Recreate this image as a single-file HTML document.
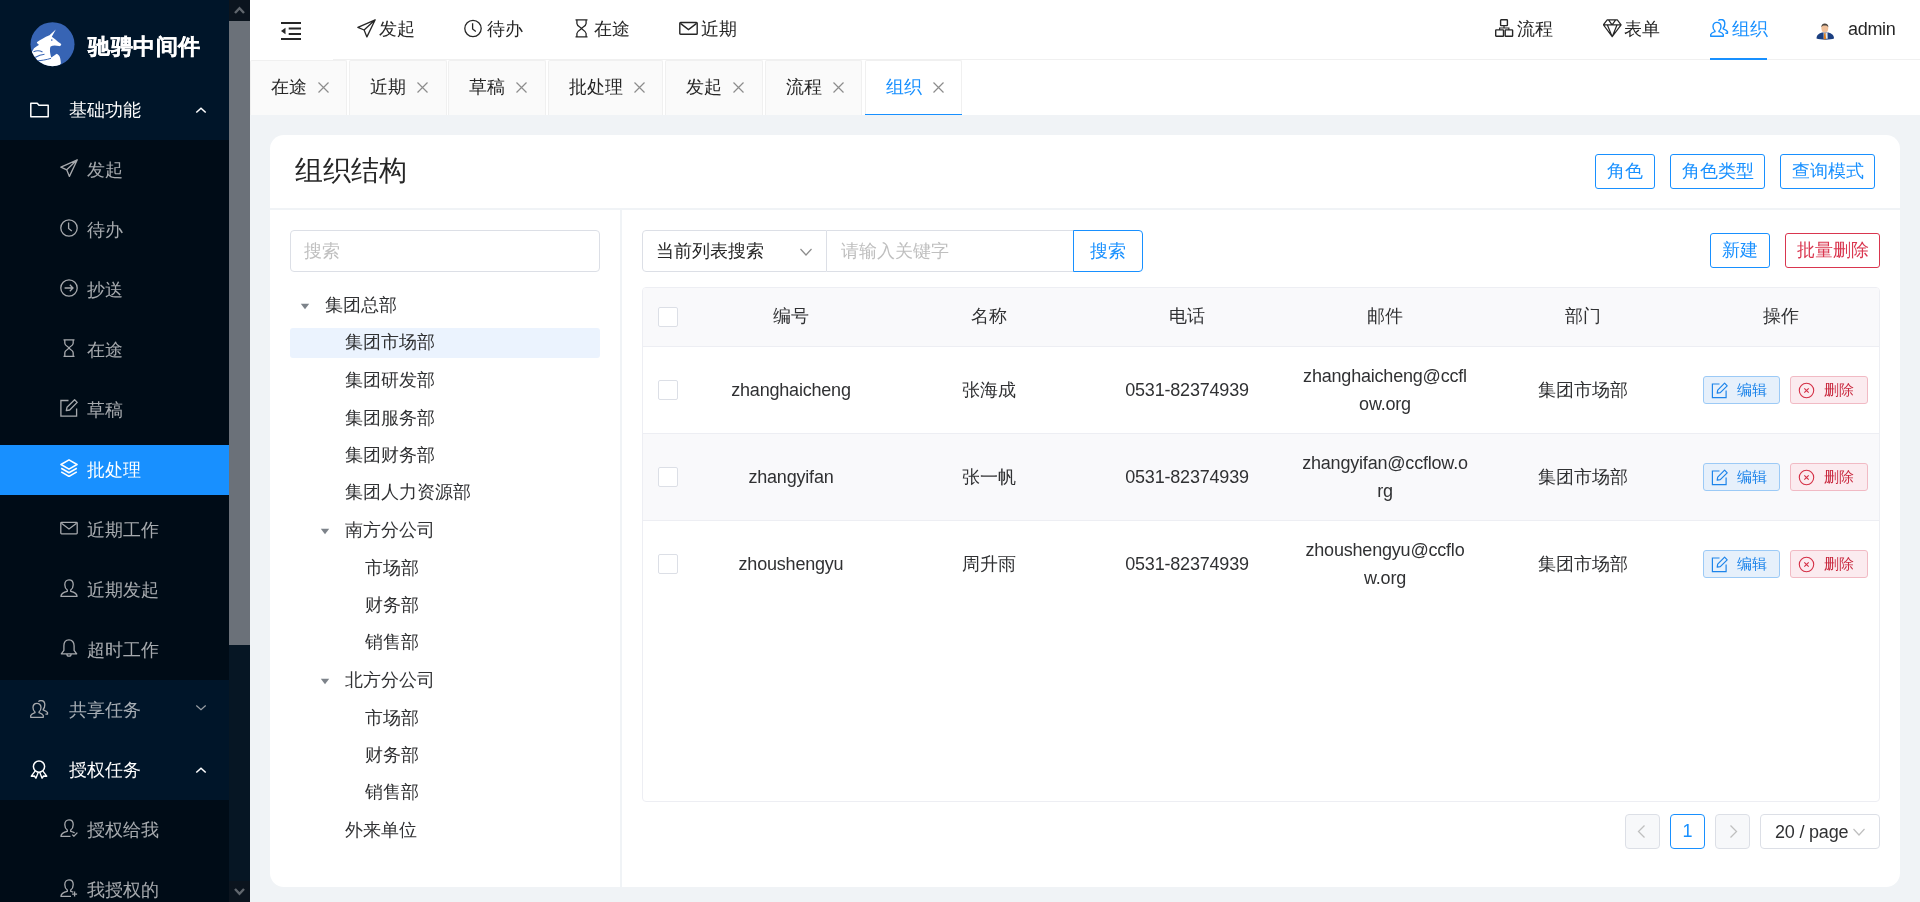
<!DOCTYPE html>
<html><head><meta charset="utf-8">
<style>
*{box-sizing:border-box;margin:0;padding:0}
body>*{will-change:transform}
html,body{width:1920px;height:902px;overflow:hidden;background:#f0f3f6;font-family:"Liberation Sans",sans-serif;color:#262626}
.a{position:absolute}
svg{display:block}
#side{left:0;top:0;width:229px;height:902px;background:#001529}
#sbar{left:229px;top:0;width:21px;height:902px;background:#061624}
.mi{position:absolute;left:0;width:229px;height:50px;line-height:50px;font-size:18px;color:rgba(255,255,255,.65)}
.mi .ic{position:absolute;left:60px;top:14px}
.mi .tx{position:absolute;left:87px;top:0}
.mt{position:absolute;left:0;width:229px;height:60px;line-height:60px;font-size:18px;color:rgba(255,255,255,.65)}
.mt .ic{position:absolute;left:30px;top:20px}
.mt .tx{position:absolute;left:69px;top:0}
.mt .ar{position:absolute;left:195px;top:26px}
#hdr{left:250px;top:0;width:1670px;height:60px;background:#fff}
#tabs{left:250px;top:60px;width:1670px;height:55px;background:#fff}
.tab{position:absolute;top:60px;height:55px;background:#fafafa;border:1px solid #f0f0f0;border-bottom:none;border-radius:2px 2px 0 0;font-size:18px;line-height:53px;color:#262626}
.tab .tx{position:absolute;left:20px;top:0}
.tab .cl{position:absolute;top:21px}
#card{left:270px;top:135px;width:1630px;height:752px;background:#fff;border-radius:14px}
.btn{position:absolute;height:35px;border:1px solid #1890ff;border-radius:3px;color:#1890ff;font-size:18px;line-height:33px;text-align:center;background:#fff}
.tree{position:absolute;font-size:18px;line-height:30px;height:30px;color:#303133;white-space:nowrap}
.th{position:absolute;top:287px;height:59px;line-height:59px;font-size:18px;color:#303133;text-align:center;width:198px}
.td{position:absolute;font-size:18px;color:#303133;text-align:center;width:198px;letter-spacing:-0.2px}
.cb{position:absolute;width:20px;height:20px;border:1px solid #dcdfe6;border-radius:2px;background:#fff}
.eb{position:absolute;width:77px;height:28px;border:1px solid #9ccaf6;background:#e6f0fb;border-radius:3px;color:#1d84ea;font-size:15px}
.db{position:absolute;width:78px;height:28px;border:1px solid #f1bac4;background:#fbebef;border-radius:3px;color:#c9293f;font-size:15px}
</style></head><body>
<div id="side" class="a">
<div class="a" style="left:0;top:140px;width:229px;height:540px;background:#000c17"></div>
<div class="a" style="left:0;top:800px;width:229px;height:102px;background:#000c17"></div>
<svg class="a" style="left:30px;top:22px" width="45" height="45" viewBox="0 0 45 45"><defs><clipPath id="lc"><circle cx="22.5" cy="22.2" r="22"/></clipPath></defs><circle cx="22.5" cy="22.2" r="22" fill="#3764b4"/><g clip-path="url(#lc)"><path fill="#fff" d="M25.8 7.4L21.8 14.7C23.8 15.9 27.2 19.1 29 20.4C30.3 21.1 31.3 21.9 31.2 22.7C30.9 23.7 29.9 24.3 28.9 24.1C26.3 23.5 22.8 23.3 20.6 24.4C19.5 26.6 19.8 30.6 21.3 35.6C23.3 34.1 25.3 32.6 26.9 31.8C28.3 32.6 29.3 33.6 29.8 35.1C30.5 37.1 30.8 39.6 30.9 41.6L29.3 43.5L10 48L-2 40L0.8 31.5C2.2 29.8 3.2 27.8 4 26.2C5.5 25 7.3 23.8 9.2 22.8C8.2 22.5 7.4 21.5 6.8 20.2C8.8 18.8 10.8 17.6 12.5 16.8C14.8 15.2 17 14 19.5 13.2Z"/><path d="M3.5 29.8C7 28.2 10 28.6 12.5 30M5 35.5C8.5 33.5 11.5 32.5 14.5 32.2" fill="none" stroke="#3764b4" stroke-width="1.1"/><path d="M6.5 39C11 38.5 16 38 21 36.3" fill="none" stroke="#3764b4" stroke-width="1"/><circle cx="21.8" cy="18.1" r="0.8" fill="#3764b4"/></g></svg>

<div class="a" style="left:88px;top:32px;font-size:22px;line-height:30px;font-weight:bold;color:#fff;white-space:nowrap;letter-spacing:0.5px;-webkit-text-stroke:0.3px #fff">驰骋中间件</div>
<div class="mt" style="top:80px;color:#fff"><svg class="ic" style="left:30px;top:22px" width="19" height="16" viewBox="0 0 19 16"><path d="M0.8 1.2h6.4l1.8 2.1h9.2v11.5H0.8z" fill="none" stroke="#fff" stroke-width="1.5" stroke-linejoin="round"/></svg><span class="tx">基础功能</span><svg class="a" style="left:195px;top:26px" width="12" height="8" viewBox="0 0 12 8"><path d="M1.3 6.5L6 2.2l4.7 4.3" fill="none" stroke="#fff" stroke-width="1.5"/></svg></div>
<div class="mi" style="top:145px;"><svg class="ic" width="18" height="18" viewBox="0 0 18 18"><path d="M17.3 0.8L0.9 8.2l5.8 2.6 2.7 6.6zM17.3 0.8L6.7 10.8" fill="none" stroke="#a6a9ad" stroke-width="1.3" stroke-linejoin="round"/></svg><span class="tx">发起</span></div>
<div class="mi" style="top:205px;"><svg class="ic" width="18" height="18" viewBox="0 0 18 18"><circle cx="9" cy="9" r="8.2" fill="none" stroke="#a6a9ad" stroke-width="1.3"/><path d="M8.6 3.6v5.8l3.2 2.6" fill="none" stroke="#a6a9ad" stroke-width="1.3"/></svg><span class="tx">待办</span></div>
<div class="mi" style="top:265px;"><svg class="ic" width="18" height="18" viewBox="0 0 18 18"><circle cx="9" cy="9" r="8.2" fill="none" stroke="#a6a9ad" stroke-width="1.3"/><path d="M4.6 9h8.2M9.8 5.8L13 9l-3.2 3.2" fill="none" stroke="#a6a9ad" stroke-width="1.3"/></svg><span class="tx">抄送</span></div>
<div class="mi" style="top:325px;"><svg class="ic" width="18" height="18" viewBox="0 0 18 18"><path d="M3.5 0.8h11M3.5 17.3h11M4.8 0.8v3.5c0 2.6 4.2 3.8 4.2 4.7s-4.2 2.1-4.2 4.7v3.6M13.2 0.8v3.5c0 2.6-4.2 3.8-4.2 4.7s4.2 2.1 4.2 4.7v3.6" fill="none" stroke="#a6a9ad" stroke-width="1.3"/></svg><span class="tx">在途</span></div>
<div class="mi" style="top:385px;"><svg class="ic" width="18" height="18" viewBox="0 0 18 18"><path d="M8.5 1.5H0.9v15.7h15.7V9.5" fill="none" stroke="#a6a9ad" stroke-width="1.3"/><path d="M6.3 11.7l.7-3.4L14.6.8l2.6 2.6-7.5 7.6z" fill="none" stroke="#a6a9ad" stroke-width="1.3" stroke-linejoin="round"/></svg><span class="tx">草稿</span></div>
<div class="mi" style="top:445px;background:#1890ff;color:#fff;"><svg class="ic" width="18" height="18" viewBox="0 0 18 18"><path d="M9 0.9l8 4.6-8 4.6-8-4.6z" fill="none" stroke="#fff" stroke-width="1.6" stroke-linejoin="round"/><path d="M1.2 9.3L9 13.8l7.8-4.5M1.2 12.9L9 17.4l7.8-4.5" fill="none" stroke="#fff" stroke-width="1.6" stroke-linejoin="round"/></svg><span class="tx">批处理</span></div>
<div class="mi" style="top:505px;"><svg class="ic" width="18" height="18" viewBox="0 0 18 18"><rect x="0.8" y="3.3" width="16.4" height="11.6" rx="0.8" fill="none" stroke="#a6a9ad" stroke-width="1.3"/><path d="M1.4 4.2L9 10l7.6-5.8" fill="none" stroke="#a6a9ad" stroke-width="1.3"/></svg><span class="tx">近期工作</span></div>
<div class="mi" style="top:565px;"><svg class="ic" width="18" height="18" viewBox="0 0 18 18"><path d="M9 0.9C6.5 0.9 4.8 2.9 4.8 5.7c0 2.3 1 4.2 2.5 5.3v1.3C4.3 12.9 1.2 14.2 0.9 17.3h16.2c-.3-3.1-3.4-4.4-6.4-5v-1.3c1.5-1.1 2.5-3 2.5-5.3C13.2 2.9 11.5.9 9 .9z" fill="none" stroke="#a6a9ad" stroke-width="1.3" stroke-linejoin="round"/></svg><span class="tx">近期发起</span></div>
<div class="mi" style="top:625px;"><svg class="ic" width="18" height="18" viewBox="0 0 18 18"><path d="M9 0.9C5.9 0.9 3.9 3.3 3.9 6.8v4.6L1.3 14.8h15.4l-2.6-3.4V6.8C14.1 3.3 12.1.9 9 .9z" fill="none" stroke="#a6a9ad" stroke-width="1.3" stroke-linejoin="round"/><path d="M6.9 14.9c0 1.4.9 2.3 2.1 2.3s2.1-.9 2.1-2.3" fill="none" stroke="#a6a9ad" stroke-width="1.3"/></svg><span class="tx">超时工作</span></div>
<div class="mi" style="top:805px;"><svg class="ic" width="18" height="18" viewBox="0 0 18 18"><path d="M10.5 17.3H0.9c.3-3.1 3.4-4.4 6.4-5v-1.3C5.8 9.9 4.8 8 4.8 5.7 4.8 2.9 6.5.9 9 .9s4.2 2 4.2 4.8c0 2.3-1 4.2-2.5 5.3v1.3c1.4.3 2.8.8 3.9 1.6" fill="none" stroke="#a6a9ad" stroke-width="1.3" stroke-linejoin="round"/><path d="M12.3 15.6l1.6 1.6 3.5-3.6" fill="none" stroke="#a6a9ad" stroke-width="1.3"/></svg><span class="tx">授权给我</span></div>
<div class="mi" style="top:865px;"><svg class="ic" width="18" height="18" viewBox="0 0 18 18"><path d="M11 17.3H0.9c.3-3.1 3.4-4.4 6.4-5v-1.3C5.8 9.9 4.8 8 4.8 5.7 4.8 2.9 6.5.9 9 .9s4.2 2 4.2 4.8c0 2.3-1 4.2-2.5 5.3v1.3c1 .2 1.8.5 2.6.9" fill="none" stroke="#a6a9ad" stroke-width="1.3" stroke-linejoin="round"/><path d="M14.6 12.6v5M12.1 15.1h5" fill="none" stroke="#a6a9ad" stroke-width="1.3"/></svg><span class="tx">我授权的</span></div>
<div class="mt" style="top:680px"><svg class="ic" width="19" height="19" viewBox="0 0 19 19"><path d="M6.9 3.4C4.7 3.4 3 5.1 3 7.6c0 2 .8 3.5 2 4.4v.7c-1.9.6-3.7 1.4-4.3 2.8v1.8h12.6v-1.8c-.6-1.4-2.4-2.2-4.3-2.8V12c1.2-.9 2-2.4 2-4.4 0-2.5-1.7-4.2-4.1-4.2z" fill="none" stroke="#a6a9ad" stroke-width="1.3" stroke-linejoin="round"/><path d="M8.4 1.6C9 .9 9.9.5 10.9.5c2.1 0 3.9 1.6 3.9 4.2 0 1.9-.5 3.5-1.6 4.6v.6c1.8.6 3.8 1.6 4.3 2.7v1.6h-2.1" fill="none" stroke="#a6a9ad" stroke-width="1.3" stroke-linejoin="round"/></svg><span class="tx">共享任务</span><svg class="a" style="left:195px;top:24px" width="12" height="8" viewBox="0 0 12 8"><path d="M1.3 1.5L6 5.8l4.7-4.3" fill="none" stroke="#9aa0a6" stroke-width="1.2"/></svg></div>
<div class="mt" style="top:740px;color:#fff"><svg class="ic" width="18" height="19" viewBox="0 0 18 19"><circle cx="9" cy="6.6" r="5.6" fill="none" stroke="#fff" stroke-width="1.5"/><path d="M5.2 10.8L1.3 16.2l3.1-.2 1.5 2.2 2.5-6.2M12.8 10.8l3.9 5.4-3.1-.2-1.5 2.2-2.5-6.2" fill="none" stroke="#fff" stroke-width="1.4" stroke-linejoin="round"/></svg><span class="tx">授权任务</span><svg class="a" style="left:195px;top:26px" width="12" height="8" viewBox="0 0 12 8"><path d="M1.3 6.5L6 2.2l4.7 4.3" fill="none" stroke="#fff" stroke-width="1.5"/></svg></div>
</div>
<div id="sbar" class="a"><div class="a" style="left:0;top:0;width:21px;height:21px;background:#0b141e"></div><svg class="a" style="left:0px;top:0px" width="21" height="21" viewBox="0 0 21 21"><path d="M6 13L10.5 8.2 15 13" fill="none" stroke="#60666d" stroke-width="2.4"/></svg><div class="a" style="left:0;top:21px;width:21px;height:624px;background:#6b7179"></div><div class="a" style="left:0;top:881px;width:21px;height:21px;background:#0b141e"></div><svg class="a" style="left:0px;top:881px" width="21" height="21" viewBox="0 0 21 21"><path d="M6 8L10.5 12.8 15 8" fill="none" stroke="#60666d" stroke-width="2.4"/></svg></div>
<div id="hdr" class="a"><div class="a" style="left:83px;top:59px;width:1587px;height:1px;background:#f0f0f0"></div><svg class="a" style="left:31px;top:22px" width="20" height="18" viewBox="0 0 20 18"><path d="M0 1h20M7.7 6.5h12.3M7.7 12h12.3M0 17h20" stroke="#262626" stroke-width="1.8"/><path d="M0 9l4.5-3.2v6.4z" fill="#262626"/></svg></div>
<svg class="a" style="left:357px;top:19px" width="19" height="19" viewBox="0 0 19 19"><path d="M18.2 0.8L0.9 8.4l6.2 2.6 2.8 6.9zM18.2 0.8L7.1 11" fill="none" stroke="#262626" stroke-width="1.3" stroke-linejoin="round"/></svg><div class="a" style="left:379px;top:14px;font-size:18px;line-height:30px;color:#262626;white-space:nowrap">发起</div>
<svg class="a" style="left:464px;top:19px" width="19" height="19" viewBox="0 0 19 19"><circle cx="9" cy="9.5" r="8.2" fill="none" stroke="#262626" stroke-width="1.3"/><path d="M8.6 4.2v5.7l3.2 2.5" fill="none" stroke="#262626" stroke-width="1.3"/></svg><div class="a" style="left:487px;top:14px;font-size:18px;line-height:30px;color:#262626;white-space:nowrap">待办</div>
<svg class="a" style="left:575px;top:19px" width="13" height="19" viewBox="0 0 13 19"><path d="M0.5 0.8h12M0.5 17.8h12M1.9 0.8v3.6c0 2.7 4.6 4.2 4.6 5.1s-4.6 2.3-4.6 5v3.3M11.1 0.8v3.6c0 2.7-4.6 4.2-4.6 5.1s4.6 2.3 4.6 5v3.3" fill="none" stroke="#262626" stroke-width="1.3"/></svg><div class="a" style="left:594px;top:14px;font-size:18px;line-height:30px;color:#262626;white-space:nowrap">在途</div>
<svg class="a" style="left:679px;top:19px" width="19" height="19" viewBox="0 0 19 19"><rect x="0.8" y="3.5" width="17.4" height="11.8" rx="0.8" fill="none" stroke="#262626" stroke-width="1.4"/><path d="M1.4 4.4l8.1 6.2 8.1-6.2" fill="none" stroke="#262626" stroke-width="1.4"/></svg><div class="a" style="left:701px;top:14px;font-size:18px;line-height:30px;color:#262626;white-space:nowrap">近期</div>
<svg class="a" style="left:1495px;top:19px" width="19" height="19" viewBox="0 0 19 19"><rect x="5.6" y="0.8" width="6.8" height="5.8" rx="0.6" fill="none" stroke="#262626" stroke-width="1.4"/><rect x="0.7" y="10.9" width="7.8" height="6.4" rx="0.6" fill="none" stroke="#262626" stroke-width="1.4"/><rect x="10.2" y="10.9" width="7.4" height="6.4" rx="0.6" fill="none" stroke="#262626" stroke-width="1.4"/><path d="M9 6.6v2.4M4.6 10.9V9h9.3v1.9" fill="none" stroke="#262626" stroke-width="1.1"/></svg><div class="a" style="left:1517px;top:14px;font-size:18px;line-height:30px;color:#262626;white-space:nowrap">流程</div>
<svg class="a" style="left:1603px;top:19px" width="19" height="19" viewBox="0 0 19 19"><path d="M4.2 0.8h10.1l3.8 5-8.9 11.9L0.4 5.8zM0.5 5.8h17.5M5.5 0.9l3.6 4.9 3.6-4.9M4.3 5.8l4.9 11.9 4.9-11.9" fill="none" stroke="#262626" stroke-width="1.2" stroke-linejoin="round"/></svg><div class="a" style="left:1624px;top:14px;font-size:18px;line-height:30px;color:#262626;white-space:nowrap">表单</div>
<svg class="a" style="left:1710px;top:19px" width="19" height="19" viewBox="0 0 19 19"><path d="M6.9 3.4C4.7 3.4 3 5.1 3 7.6c0 2 .8 3.5 2 4.4v.7c-1.9.6-3.7 1.4-4.3 2.8v1.8h12.6v-1.8c-.6-1.4-2.4-2.2-4.3-2.8V12c1.2-.9 2-2.4 2-4.4 0-2.5-1.7-4.2-4.1-4.2z" fill="none" stroke="#1890ff" stroke-width="1.4" stroke-linejoin="round"/><path d="M8.4 1.6C9 .9 9.9.5 10.9.5c2.1 0 3.9 1.6 3.9 4.2 0 1.9-.5 3.5-1.6 4.6v.6c1.8.6 3.8 1.6 4.3 2.7v1.6h-2.1" fill="none" stroke="#1890ff" stroke-width="1.4" stroke-linejoin="round"/></svg><div class="a" style="left:1732px;top:14px;font-size:18px;line-height:30px;color:#1890ff;white-space:nowrap">组织</div>
<div class="a" style="left:1710px;top:58px;width:57px;height:2px;background:#1890ff"></div>
<svg class="a" style="left:1816px;top:23px" width="19" height="17" viewBox="0 0 19 17"><path d="M0.5 15.5c0-3.5 2.5-5 5.5-6h6.5c3 1 5.5 2.5 5.5 6c-3 1.5-14 1.5-17.5 0z" fill="#1b3f80"/><path d="M7.5 9.5l1.5 1 2.5-1.2 .2 6.5h-4z" fill="#dfe6ee"/><path d="M8.2 10.2h1.3l.6 6h-2.4z" fill="#e07c1a"/><ellipse cx="8.8" cy="5.3" rx="3.4" ry="4.2" fill="#f0c09a"/><path d="M5.3 4.6C5.2 1.8 6.8.6 8.8.6s3.8 1.2 3.6 4c-.4-1.6-1.5-2.2-3.6-2.2S5.8 2.9 5.3 4.6z" fill="#4a4540"/></svg>

<div class="a" style="left:1848px;top:14px;font-size:18px;line-height:30px;white-space:nowrap;letter-spacing:-0.3px">admin</div>
<div id="tabs" class="a"></div>
<div class="tab" style="left:250px;width:97px;"><span class="tx" style="">在途</span><svg class="cl" width="11" height="11" viewBox="0 0 11 11" style="left:67px"><path d="M0.5 0.5l10 10M10.5 0.5l-10 10" stroke="#8c8c8c" stroke-width="1.2"/></svg></div>
<div class="tab" style="left:349px;width:98px;"><span class="tx" style="">近期</span><svg class="cl" width="11" height="11" viewBox="0 0 11 11" style="left:67px"><path d="M0.5 0.5l10 10M10.5 0.5l-10 10" stroke="#8c8c8c" stroke-width="1.2"/></svg></div>
<div class="tab" style="left:448px;width:98px;"><span class="tx" style="">草稿</span><svg class="cl" width="11" height="11" viewBox="0 0 11 11" style="left:67px"><path d="M0.5 0.5l10 10M10.5 0.5l-10 10" stroke="#8c8c8c" stroke-width="1.2"/></svg></div>
<div class="tab" style="left:548px;width:115px;"><span class="tx" style="">批处理</span><svg class="cl" width="11" height="11" viewBox="0 0 11 11" style="left:85px"><path d="M0.5 0.5l10 10M10.5 0.5l-10 10" stroke="#8c8c8c" stroke-width="1.2"/></svg></div>
<div class="tab" style="left:665px;width:98px;"><span class="tx" style="">发起</span><svg class="cl" width="11" height="11" viewBox="0 0 11 11" style="left:67px"><path d="M0.5 0.5l10 10M10.5 0.5l-10 10" stroke="#8c8c8c" stroke-width="1.2"/></svg></div>
<div class="tab" style="left:765px;width:97px;"><span class="tx" style="">流程</span><svg class="cl" width="11" height="11" viewBox="0 0 11 11" style="left:67px"><path d="M0.5 0.5l10 10M10.5 0.5l-10 10" stroke="#8c8c8c" stroke-width="1.2"/></svg></div>
<div class="tab" style="left:865px;width:97px;background:#fff;"><span class="tx" style="color:#1890ff">组织</span><svg class="cl" width="11" height="11" viewBox="0 0 11 11" style="left:67px"><path d="M0.5 0.5l10 10M10.5 0.5l-10 10" stroke="#8c8c8c" stroke-width="1.2"/></svg><div class="a" style="left:-1px;right:-1px;bottom:0;height:1px;background:#1890ff"></div></div>
<div id="card" class="a"></div>
<div class="a" style="left:295px;top:150px;font-size:28px;line-height:42px;color:#262626;white-space:nowrap">组织结构</div>
<div class="btn" style="left:1595px;top:154px;width:60px">角色</div>
<div class="btn" style="left:1670px;top:154px;width:95px">角色类型</div>
<div class="btn" style="left:1780px;top:154px;width:95px">查询模式</div>
<div class="a" style="left:270px;top:208px;width:1630px;height:2px;background:#f0f3f6"></div>
<div class="a" style="left:620px;top:210px;width:2px;height:677px;background:#f0f3f6"></div>
<div class="a" style="left:290px;top:230px;width:310px;height:42px;border:1px solid #dcdfe6;border-radius:4px;background:#fff"></div>
<div class="a" style="left:304px;top:236px;font-size:18px;line-height:30px;color:#bfbfbf">搜索</div>
<div class="a" style="left:290px;top:328px;width:310px;height:30px;background:#ebf3fe;border-radius:3px"></div>
<div class="tree" style="left:325px;top:290px">集团总部</div>
<svg class="a" style="left:300px;top:303px" width="10" height="7" viewBox="0 0 10 7"><path d="M0.8 0.8h8.4L5 6.2z" fill="#7d838a"/></svg>
<div class="tree" style="left:345px;top:327px">集团市场部</div>
<div class="tree" style="left:345px;top:365px">集团研发部</div>
<div class="tree" style="left:345px;top:403px">集团服务部</div>
<div class="tree" style="left:345px;top:440px">集团财务部</div>
<div class="tree" style="left:345px;top:477px">集团人力资源部</div>
<div class="tree" style="left:345px;top:515px">南方分公司</div>
<svg class="a" style="left:320px;top:528px" width="10" height="7" viewBox="0 0 10 7"><path d="M0.8 0.8h8.4L5 6.2z" fill="#7d838a"/></svg>
<div class="tree" style="left:365px;top:553px">市场部</div>
<div class="tree" style="left:365px;top:590px">财务部</div>
<div class="tree" style="left:365px;top:627px">销售部</div>
<div class="tree" style="left:345px;top:665px">北方分公司</div>
<svg class="a" style="left:320px;top:678px" width="10" height="7" viewBox="0 0 10 7"><path d="M0.8 0.8h8.4L5 6.2z" fill="#7d838a"/></svg>
<div class="tree" style="left:365px;top:703px">市场部</div>
<div class="tree" style="left:365px;top:740px">财务部</div>
<div class="tree" style="left:365px;top:777px">销售部</div>
<div class="tree" style="left:345px;top:815px">外来单位</div>
<div class="a" style="left:642px;top:230px;width:185px;height:42px;border:1px solid #dcdfe6;border-radius:4px 0 0 4px;background:#fff"></div>
<div class="a" style="left:656px;top:236px;font-size:18px;line-height:30px;color:#262626;white-space:nowrap">当前列表搜索</div>
<svg class="a" style="left:800px;top:248px" width="12" height="8" viewBox="0 0 12 8"><path d="M0.5 1l5.5 6 5.5-6" fill="none" stroke="#8c8c8c" stroke-width="1.2"/></svg>
<div class="a" style="left:827px;top:230px;width:247px;height:42px;border:1px solid #dcdfe6;border-left:none;background:#fff"></div>
<div class="a" style="left:841px;top:236px;font-size:18px;line-height:30px;color:#bfbfbf;white-space:nowrap">请输入关键字</div>
<div class="btn" style="left:1073px;top:230px;width:70px;height:42px;line-height:40px;border-radius:0 4px 4px 0">搜索</div>
<div class="btn" style="left:1710px;top:233px;width:60px">新建</div>
<div class="btn" style="left:1785px;top:233px;width:95px;border-color:#d9364f;color:#d9364f">批量删除</div>
<div class="a" style="left:642px;top:287px;width:1238px;height:515px;border:1px solid #edeef3;border-radius:4px;background:#fff;overflow:hidden"><div class="a" style="left:0;top:0;width:1236px;height:59px;background:#f9f9fb;border-bottom:1px solid #edeef3"></div><div class="a" style="left:0;top:59px;width:1236px;height:87px;border-bottom:1px solid #edeef3"></div><div class="a" style="left:0;top:146px;width:1236px;height:87px;background:#f9f9fb;border-bottom:1px solid #edeef3"></div></div>
<div class="cb" style="left:658px;top:307px"></div>
<div class="th" style="left:692px">编号</div>
<div class="th" style="left:890px">名称</div>
<div class="th" style="left:1088px">电话</div>
<div class="th" style="left:1286px">邮件</div>
<div class="th" style="left:1484px">部门</div>
<div class="th" style="left:1682px">操作</div>
<div class="cb" style="left:658px;top:380px"></div>
<div class="td" style="left:692px;top:375px;line-height:30px">zhanghaicheng</div>
<div class="td" style="left:890px;top:375px;line-height:30px">张海成</div>
<div class="td" style="left:1088px;top:375px;line-height:30px">0531-82374939</div>
<div class="td" style="left:1286px;top:362px;line-height:28px">zhanghaicheng@ccfl<br>ow.org</div>
<div class="td" style="left:1484px;top:375px;line-height:30px">集团市场部</div>
<div class="eb" style="left:1703px;top:376px"><svg class="a" style="left:7px;top:5px" width="17" height="17" viewBox="0 0 17 17"><path d="M8.5 2H1.4v13.7h13.7V8.5" fill="none" stroke="#1d84ea" stroke-width="1.2"/><path d="M6.2 11.2l.5-3.1L13.6 1.2l2.6 2.6-6.9 6.9z" fill="none" stroke="#1d84ea" stroke-width="1.2" stroke-linejoin="round"/></svg><span class="a" style="left:33px;top:3px;line-height:20px">编辑</span></div>
<div class="db" style="left:1790px;top:376px"><svg class="a" style="left:7px;top:5px" width="17" height="17" viewBox="0 0 17 17"><circle cx="8.5" cy="8.5" r="7.2" fill="none" stroke="#d42f45" stroke-width="1.1"/><path d="M6.3 6.3l4.4 4.4M10.7 6.3l-4.4 4.4" stroke="#d42f45" stroke-width="1.1"/></svg><span class="a" style="left:33px;top:3px;line-height:20px">删除</span></div>
<div class="cb" style="left:658px;top:467px"></div>
<div class="td" style="left:692px;top:462px;line-height:30px">zhangyifan</div>
<div class="td" style="left:890px;top:462px;line-height:30px">张一帆</div>
<div class="td" style="left:1088px;top:462px;line-height:30px">0531-82374939</div>
<div class="td" style="left:1286px;top:449px;line-height:28px">zhangyifan@ccflow.o<br>rg</div>
<div class="td" style="left:1484px;top:462px;line-height:30px">集团市场部</div>
<div class="eb" style="left:1703px;top:463px"><svg class="a" style="left:7px;top:5px" width="17" height="17" viewBox="0 0 17 17"><path d="M8.5 2H1.4v13.7h13.7V8.5" fill="none" stroke="#1d84ea" stroke-width="1.2"/><path d="M6.2 11.2l.5-3.1L13.6 1.2l2.6 2.6-6.9 6.9z" fill="none" stroke="#1d84ea" stroke-width="1.2" stroke-linejoin="round"/></svg><span class="a" style="left:33px;top:3px;line-height:20px">编辑</span></div>
<div class="db" style="left:1790px;top:463px"><svg class="a" style="left:7px;top:5px" width="17" height="17" viewBox="0 0 17 17"><circle cx="8.5" cy="8.5" r="7.2" fill="none" stroke="#d42f45" stroke-width="1.1"/><path d="M6.3 6.3l4.4 4.4M10.7 6.3l-4.4 4.4" stroke="#d42f45" stroke-width="1.1"/></svg><span class="a" style="left:33px;top:3px;line-height:20px">删除</span></div>
<div class="cb" style="left:658px;top:554px"></div>
<div class="td" style="left:692px;top:549px;line-height:30px">zhoushengyu</div>
<div class="td" style="left:890px;top:549px;line-height:30px">周升雨</div>
<div class="td" style="left:1088px;top:549px;line-height:30px">0531-82374939</div>
<div class="td" style="left:1286px;top:536px;line-height:28px">zhoushengyu@ccflo<br>w.org</div>
<div class="td" style="left:1484px;top:549px;line-height:30px">集团市场部</div>
<div class="eb" style="left:1703px;top:550px"><svg class="a" style="left:7px;top:5px" width="17" height="17" viewBox="0 0 17 17"><path d="M8.5 2H1.4v13.7h13.7V8.5" fill="none" stroke="#1d84ea" stroke-width="1.2"/><path d="M6.2 11.2l.5-3.1L13.6 1.2l2.6 2.6-6.9 6.9z" fill="none" stroke="#1d84ea" stroke-width="1.2" stroke-linejoin="round"/></svg><span class="a" style="left:33px;top:3px;line-height:20px">编辑</span></div>
<div class="db" style="left:1790px;top:550px"><svg class="a" style="left:7px;top:5px" width="17" height="17" viewBox="0 0 17 17"><circle cx="8.5" cy="8.5" r="7.2" fill="none" stroke="#d42f45" stroke-width="1.1"/><path d="M6.3 6.3l4.4 4.4M10.7 6.3l-4.4 4.4" stroke="#d42f45" stroke-width="1.1"/></svg><span class="a" style="left:33px;top:3px;line-height:20px">删除</span></div>
<div class="a" style="left:1625px;top:814px;width:35px;height:35px;border:1px solid #dcdfe6;border-radius:4px;background:#f7f8fa"></div>
<svg class="a" style="left:1637px;top:825px" width="9" height="13" viewBox="0 0 9 13"><path d="M7.5 0.5l-6 6 6 6" fill="none" stroke="#bfbfbf" stroke-width="1.3"/></svg>
<div class="a" style="left:1670px;top:814px;width:35px;height:35px;border:1px solid #1890ff;border-radius:4px;background:#fff;color:#1890ff;font-size:18px;line-height:33px;text-align:center">1</div>
<div class="a" style="left:1715px;top:814px;width:35px;height:35px;border:1px solid #dcdfe6;border-radius:4px;background:#f7f8fa"></div>
<svg class="a" style="left:1729px;top:825px" width="9" height="13" viewBox="0 0 9 13"><path d="M1.5 0.5l6 6-6 6" fill="none" stroke="#bfbfbf" stroke-width="1.3"/></svg>
<div class="a" style="left:1760px;top:814px;width:120px;height:35px;border:1px solid #dcdfe6;border-radius:4px;background:#fff"></div>
<div class="a" style="left:1775px;top:817px;font-size:18px;line-height:30px;color:#303133;white-space:nowrap;letter-spacing:-0.2px">20 / page</div>
<svg class="a" style="left:1853px;top:828px" width="12" height="8" viewBox="0 0 12 8"><path d="M0.5 1l5.5 6 5.5-6" fill="none" stroke="#bfbfbf" stroke-width="1.2"/></svg>
</body></html>
